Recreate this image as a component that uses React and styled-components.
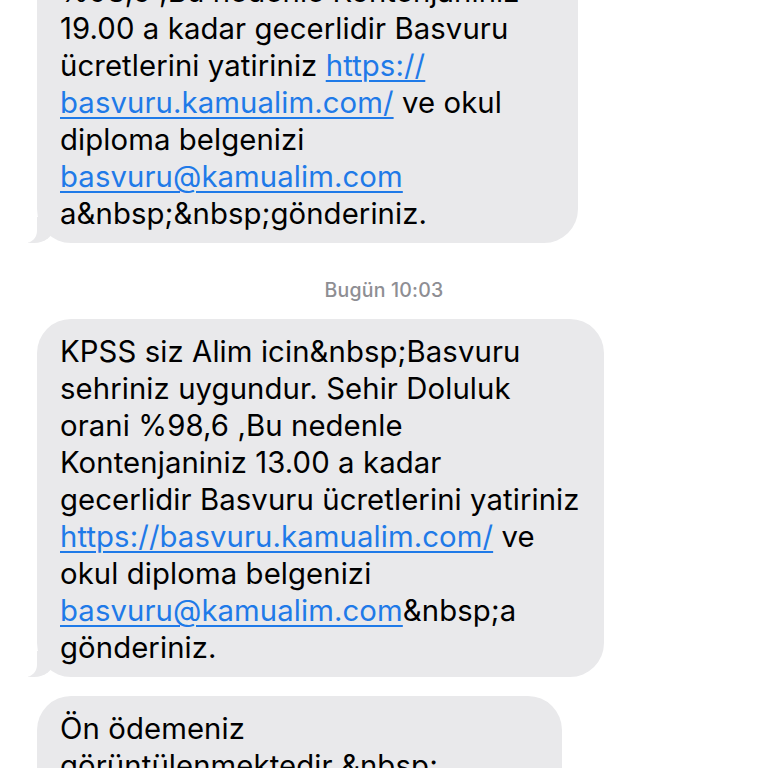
import styled, { createGlobalStyle } from "styled-components";

const GlobalStyle = createGlobalStyle`
  html, body {
    margin: 0;
    padding: 0;
    background: #ffffff;
  }
  body {
    font-family: Inter, "Noto Sans", "Liberation Sans", sans-serif;
    -webkit-font-smoothing: antialiased;
  }
`;

const Screen = styled.div`
  width: 768px;
  height: 768px;
  overflow: hidden;
  background: #ffffff;
`;

const Thread = styled.div`
  display: flex;
  flex-direction: column;
  align-items: flex-start;
  margin-top: -115px;
  padding-left: 37px;
`;

const Bubble = styled.div`
  position: relative;
  box-sizing: border-box;
  width: ${(p) => p.$width}px;
  margin-bottom: ${(p) => p.$gap || 0}px;
  padding: 14px 18px 11px 23px;
  background: #e9e9eb;
  border-radius: 34px;
  color: #000000;
  font-size: 29.3px;
  line-height: 37px;
  letter-spacing: 0.1px;
  white-space: nowrap;

  ${(p) =>
    p.$tail &&
    `
    &::before {
      content: "";
      position: absolute;
      left: -9px;
      bottom: 0;
      width: 26px;
      height: 26px;
      background: #e9e9eb;
      border-bottom-right-radius: 20px 16px;
    }
    &::after {
      content: "";
      position: absolute;
      left: -16px;
      bottom: 0;
      width: 16px;
      height: 26px;
      background: #ffffff;
      border-bottom-right-radius: 12px;
    }
  `}
`;

const Line = styled.span`
  display: block;
  position: relative;
  z-index: 1;
`;

const Link = styled.span`
  color: #1f7ae8;
  text-decoration: underline;
  text-decoration-thickness: 1.5px;
  text-underline-offset: 4px;
`;

const Stamp = styled.div`
  align-self: center;
  margin: 35px 0 17px -37px;
  color: #8e8e93;
  font-size: 19.5px;
  font-weight: 500;
  line-height: 24px;
  letter-spacing: 0.2px;
`;

const first = [
  "KPSS siz Alim icin&nbsp;Basvuru",
  "sehriniz uygundur. Sehir Doluluk orani",
  "%98,6 ,Bu nedenle Kontenjaniniz",
];

export default function App() {
  return (
    <Screen>
      <GlobalStyle />
      <Thread>
        <Bubble $width={541} $tail>
          {first.map((t) => (
            <Line key={t}>{t}</Line>
          ))}
          <Line>19.00 a kadar gecerlidir Basvuru</Line>
          <Line>
            ücretlerini yatiriniz <Link>https://</Link>
          </Line>
          <Line>
            <Link>basvuru.kamualim.com/</Link> ve okul
          </Line>
          <Line>diploma belgenizi</Line>
          <Line>
            <Link>basvuru@kamualim.com</Link>
          </Line>
          <Line>a&amp;nbsp;&amp;nbsp;gönderiniz.</Line>
        </Bubble>

        <Stamp>Bugün 10:03</Stamp>

        <Bubble $width={567} $tail $gap={19}>
          <Line>KPSS siz Alim icin&amp;nbsp;Basvuru</Line>
          <Line>sehriniz uygundur. Sehir Doluluk</Line>
          <Line>orani %98,6 ,Bu nedenle</Line>
          <Line>Kontenjaniniz 13.00 a kadar</Line>
          <Line>gecerlidir Basvuru ücretlerini yatiriniz</Line>
          <Line>
            <Link>https://basvuru.kamualim.com/</Link> ve
          </Line>
          <Line>okul diploma belgenizi</Line>
          <Line>
            <Link>basvuru@kamualim.com</Link>&amp;nbsp;a
          </Line>
          <Line>gönderiniz.</Line>
        </Bubble>

        <Bubble $width={525}>
          <Line>Ön ödemeniz</Line>
          <Line>görüntülenmektedir &amp;nbsp;</Line>
          <Line>lütfen ödeme işleminizi tamamlayınız.</Line>
        </Bubble>
      </Thread>
    </Screen>
  );
}
